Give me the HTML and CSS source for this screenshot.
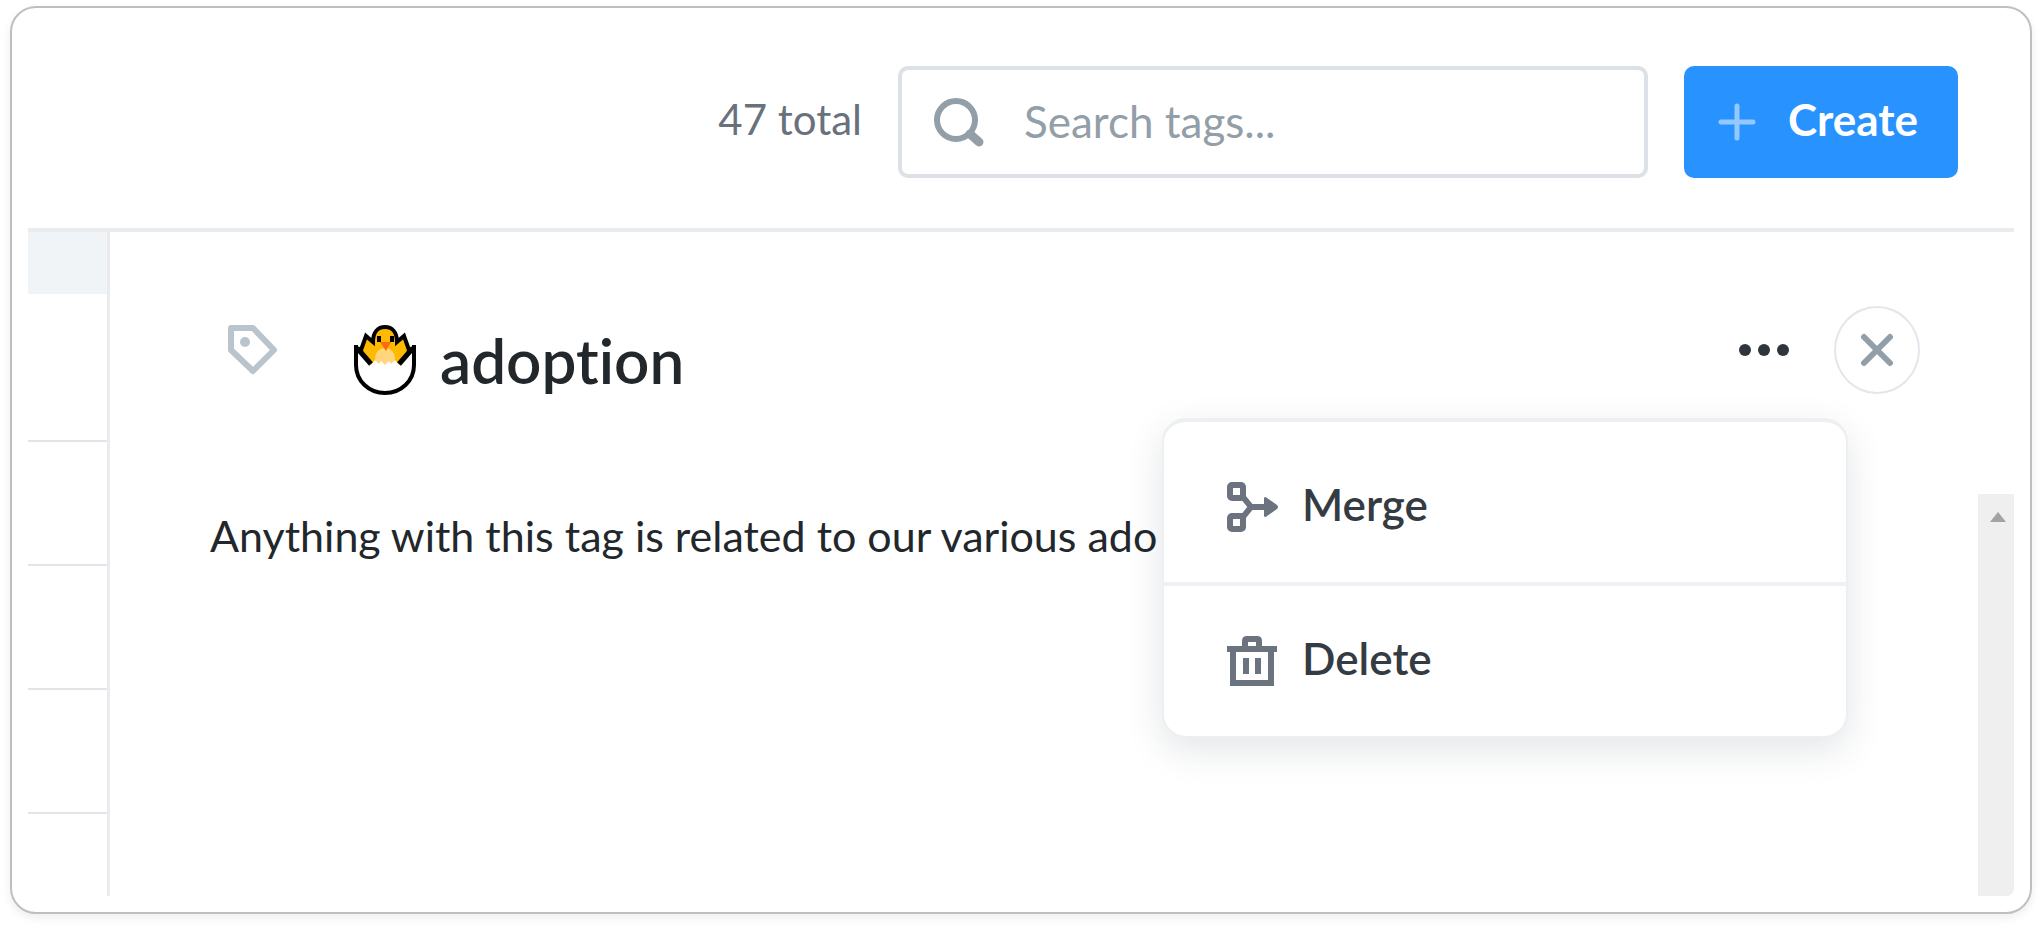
FILE: index.html
```html
<!DOCTYPE html>
<html lang="en">
<head>
<meta charset="utf-8">
<title>Tags</title>
<link rel="stylesheet" href="styles.css">
</head>
<body>
<main class="card">
  <header class="toolbar">
    <span class="total">47 total</span>
    <label class="search">
      <svg class="search-icon" viewBox="0 0 50 50" fill="none" stroke="currentColor" aria-hidden="true">
        <circle cx="22" cy="23" r="19" stroke-width="6"/>
        <path d="M36 37l9 8" stroke-width="9" stroke-linecap="round"/>
      </svg>
      <input class="search-input" type="text" placeholder="Search tags..." aria-label="Search tags">
    </label>
    <button class="create" type="button">
      <svg class="plus-icon" viewBox="0 0 38 38" stroke="currentColor" stroke-width="5" stroke-linecap="round" aria-hidden="true"><path d="M19 3v32M3 19h32"/></svg>
      <span class="label">Create</span>
    </button>
  </header>
  <div class="content">
    <div class="list">
      <div class="list-head"></div>
      <div class="list-row list-row-first"></div>
      <div class="list-row"></div>
      <div class="list-row"></div>
      <div class="list-row"></div>
    </div>
    <section class="detail">
      <div class="detail-head">
        <svg class="tag-icon" viewBox="0 0 50 50" fill="none" stroke="currentColor" stroke-linejoin="round" aria-hidden="true">
          <path d="M3 3h22l21 22-21 21L3 25z" stroke-width="6"/>
          <circle cx="17" cy="17" r="5" fill="currentColor" stroke="none"/>
        </svg>
        <h1 class="title">
          <svg class="chick" viewBox="0 0 62 72" role="img" aria-label="Hatching chick">
            <path d="M19 18l-7-6-5 14 3 17h42l3-17-5-14-7 6C43 8 38 3 31 3S19 8 19 18z" fill="#ffb900" stroke="#000" stroke-width="4"/>
            <circle cx="31" cy="34" r="10" fill="#ffd67d"/>
            <path d="M2 24v17c0 16 13 28 29 28s29-12 29-28V24L45 41l-4-5-4 4-2-3-4 4-4-4-2 3-4-4-4 5z" fill="#fff"/>
            <path d="M2 21v20C2 57 15 69 31 69s29-12 29-28V21" fill="none" stroke="#000" stroke-width="4"/>
            <path d="M3 24l14 16M59 24L45 40" stroke="#000" stroke-width="5"/>
            <path d="M26 18h11l-5 9z" fill="#ff6a10"/>
            <path d="M23 12h4v6h-4zM36 12h4v6h-4z"/>
          </svg>
          adoption
        </h1>
        <div class="actions">
          <button class="more" type="button" aria-label="More actions">
            <svg class="more-icon" viewBox="0 0 52 14" fill="currentColor"><circle cx="7" cy="7" r="6"/><circle cx="26" cy="7" r="6"/><circle cx="45" cy="7" r="6"/></svg>
          </button>
          <button class="close" type="button" aria-label="Close">
            <svg class="close-icon" viewBox="0 0 34 34" stroke="currentColor" stroke-width="6" stroke-linecap="round"><path d="M4 4l26 26M30 4L4 30"/></svg>
          </button>
          <div class="menu">
            <button class="menu-item" type="button">
              <svg class="menu-icon" viewBox="0 0 52 52" fill="none" stroke="currentColor" aria-hidden="true">
                <rect x="4" y="4" width="13" height="13" rx="2" stroke-width="6"/>
                <rect x="4" y="35" width="13" height="13" rx="2" stroke-width="6"/>
                <path d="M17 16l8 10-8 10M24 26h20" stroke-width="6"/>
                <path d="M38 17q1-2 3 0l10 7q2 2 0 4l-10 7q-2 2-3 0z" fill="currentColor" stroke="none"/>
              </svg>
              <span class="label">Merge</span>
            </button>
            <button class="menu-item" type="button">
              <svg class="menu-icon" viewBox="0 0 52 52" fill="none" stroke="currentColor" aria-hidden="true">
                <path d="M1 14h50" stroke-width="6"/>
                <path d="M7 16v32h38V16" stroke-width="6"/>
                <path d="M19 14V6q0-2 2-2h10q2 0 2 2v8" stroke-width="6"/>
                <path d="M20 23v16M32 23v16" stroke-width="6"/>
              </svg>
              <span class="label">Delete</span>
            </button>
          </div>
        </div>
      </div>
      <div class="description">
        <p class="description-text">Anything with this tag is related to our various ado</p>
        <div class="scrollbar">
          <svg class="scroll-arrow" viewBox="0 0 16 10" fill="currentColor" aria-hidden="true"><path d="M8 0l8 10H0z"/></svg>
        </div>
      </div>
    </section>
  </div>
</main>
</body>
</html>
```
FILE: styles.css
```css
* { box-sizing: border-box; }

body {
  margin: 0;
  padding: 6px 10px 14px;
  background: #fff;
  color: #22272c;
  font-family: Lato, "Open Sans", sans-serif;
  font-size: 44px;
  font-variant-ligatures: none;
  line-height: 52px;
}

button, input { font: inherit; }

.card {
  display: flex;
  flex-direction: column;
  min-height: calc(100vh - 20px);
  padding: 16px;
  border: 2px solid #bfbfbf;
  border-radius: 26px;
  box-shadow: 0 4px 10px rgba(0, 0, 0, 0.07);
}

.toolbar {
  display: flex;
  align-items: center;
  justify-content: flex-end;
  gap: 36px;
  padding: 42px 56px 50px 0;
  border-bottom: 4px solid #e8ecef;
}

.total {
  padding-bottom: 6px;
  color: #68717c;
  font-size: 42px;
  white-space: nowrap;
}

.search {
  display: flex;
  align-items: center;
  width: 750px;
  height: 112px;
  padding: 0 32px;
  gap: 40px;
  border: 4px solid #dbe1e6;
  border-radius: 10px;
  color: #929ea8;
}

.search-icon { flex: none; width: 50px; height: 50px; }

.search-input {
  flex: 1;
  min-width: 0;
  padding: 0 0 2px;
  border: 0;
  outline: 0;
  background: none;
  color: #22272c;
}

.search-input::placeholder { color: #929ea8; opacity: 1; }

.create {
  display: flex;
  align-items: center;
  width: 274px;
  height: 112px;
  padding: 0 0 0 34px;
  gap: 32px;
  border: 0;
  border-radius: 10px;
  background: #2893ff;
  color: #fff;
  font-weight: 700;
}

.label { padding-bottom: 6px; }

.plus-icon { width: 38px; height: 38px; color: #93c9ff; }

.content { display: flex; flex: 1; }

.list {
  flex: none;
  width: 82px;
  border-right: 3px solid #e9ebef;
}

.list-head { height: 62px; background: #f0f4f7; }

.list-row { height: 124px; border-bottom: 2px solid #e0e5e9; }

.list-row-first { height: 148px; }

.detail {
  display: flex;
  flex: 1;
  flex-direction: column;
  min-width: 0;
  padding-top: 74px;
}

.detail-head {
  display: flex;
  align-items: center;
  height: 88px;
  padding: 0 94px 0 118px;
}

.tag-icon { flex: none; width: 50px; height: 50px; color: #bac4cd; }

.title {
  display: flex;
  align-items: center;
  gap: 24px;
  margin: 0 0 0 76px;
  padding-top: 20px;
  font-size: 62px;
  font-weight: 600;
}

.chick { width: 62px; height: 72px; }

.actions {
  display: flex;
  align-items: center;
  gap: 44px;
  position: relative;
  margin-left: auto;
}

.more { display: flex; padding: 0; border: 0; background: none; color: #2f353c; }

.more-icon { width: 52px; height: 14px; }

.close {
  display: flex;
  align-items: center;
  justify-content: center;
  width: 86px;
  height: 88px;
  padding: 0;
  border: 2px solid #e2e7ec;
  border-radius: 50%;
  background: #fff;
  color: #929ea8;
}

.close-icon { width: 34px; height: 34px; }

.menu {
  position: absolute;
  top: 112px;
  right: 72px;
  z-index: 1;
  width: 686px;
  padding-top: 10px;
  border: solid #edeff2;
  border-width: 4px 2px 2px;
  border-radius: 24px;
  background: #fff;
  box-shadow: 0 12px 36px rgba(40, 55, 70, 0.13);
}

.menu-item {
  display: flex;
  align-items: center;
  gap: 24px;
  width: 100%;
  height: 150px;
  padding: 0 62px;
  border: 0;
  background: none;
  color: #353b42;
  font-weight: 600;
}

.menu-item + .menu-item { height: 154px; border-top: 4px solid #eff1f4; }

.menu-icon { width: 52px; height: 52px; color: #6a737e; }

.description { display: flex; flex: 1; margin-top: 100px; }

.description-text {
  flex: 1;
  min-width: 0;
  margin: 0;
  padding: 16px 0 0 100px;
  font-size: 43px;
  white-space: nowrap;
}

.scrollbar {
  display: flex;
  flex: none;
  align-items: flex-start;
  justify-content: center;
  width: 36px;
  padding: 18px 0 0 4px;
  border-bottom-right-radius: 8px;
  background: #efefef;
  color: #a3a3a3;
}

.scroll-arrow { width: 16px; height: 10px; }
```
